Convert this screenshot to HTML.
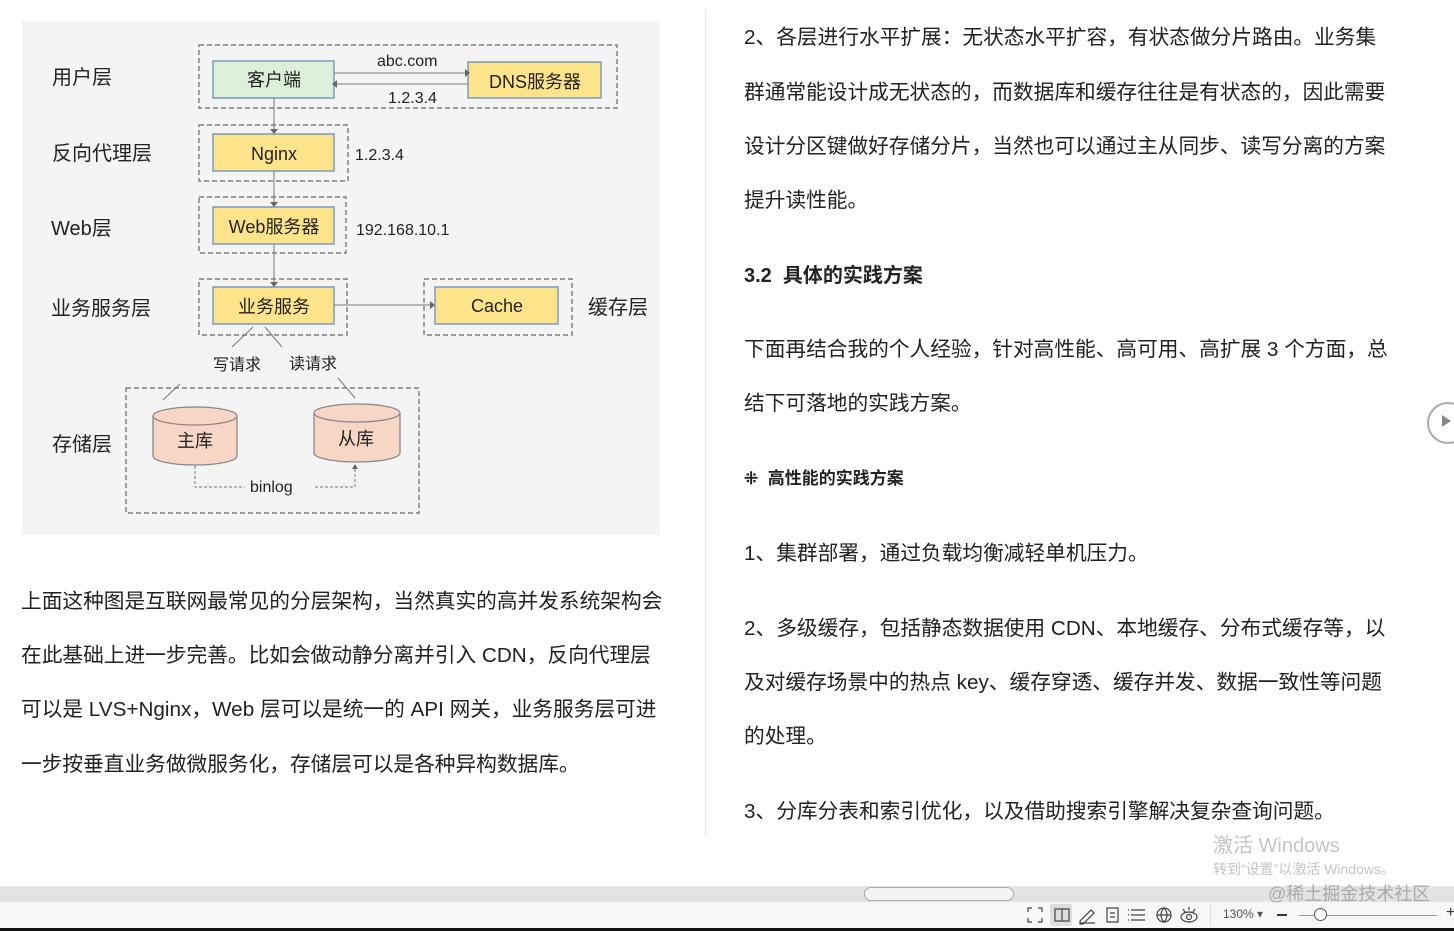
<!DOCTYPE html>
<html><head><meta charset="utf-8"><style>
body{margin:0;width:1454px;height:931px;background:#fff;position:relative;overflow:hidden;font-family:"Liberation Sans","Noto Sans CJK SC",sans-serif;color:#222}
.t{position:absolute;font-size:20.7px;white-space:nowrap;line-height:1;}
.h{font-weight:bold;}
</style></head><body>
<svg style="position:absolute;left:0;top:0" width="705" height="560" font-family="Liberation Sans,Noto Sans CJK SC,sans-serif">
<rect x="22" y="22" width="638" height="513" fill="#f4f4f4"/>
<g fill="none" stroke="#666" stroke-dasharray="5,3" stroke-width="1.2">
<rect x="199" y="45" width="418" height="63"/>
<rect x="199" y="125" width="149" height="56"/>
<rect x="199" y="197" width="147" height="56"/>
<rect x="199" y="279" width="148" height="56"/>
<rect x="424" y="279" width="148" height="56"/>
<rect x="126" y="388" width="293" height="125"/>
</g>
<g stroke="#555" stroke-width="1.5">
<rect x="213" y="61" width="121" height="37" fill="#dcefd8" stroke="#7a9cc0"/>
<rect x="468" y="62" width="133" height="36" fill="#fde48a" stroke="#7a9cc0"/>
<rect x="213" y="134" width="121" height="37" fill="#fde48a" stroke="#7a9cc0"/>
<rect x="213" y="207" width="121" height="37" fill="#fde48a" stroke="#7a9cc0"/>
<rect x="213" y="287" width="121" height="37" fill="#fde48a" stroke="#7a9cc0"/>
<rect x="435" y="287" width="123" height="37" fill="#fde48a" stroke="#7a9cc0"/>
</g>
<g stroke="#777" stroke-width="1" fill="none">
<path d="M334 73H465M468 84H337M274 98V131M274 171V204M274 244V284M334 305H432M253 327L232 347M265 327L282 347M180 384L163 400M338 378L355 398"/>
<path d="M195 466V487H245M315 487H355V468" stroke-dasharray="3,2"/>
</g>
<g fill="#666"><path d="M465 69l5 4-5 4zM337 80l-5 4 5 4zM270 129l4 5 4-5zM270 202l4 5 4-5zM270 282l4 5 4-5zM430 301l5 4-5 4zM352 469l3-5 3 5z"/></g>
<g stroke="#888" stroke-width="1.3" fill="#f7d6c6">
<path d="M153 416V456A42 9 0 0 0 237 456V416"/>
<ellipse cx="195" cy="416" rx="42" ry="9"/>
<path d="M314 413V453A43 9 0 0 0 400 453V413"/>
<ellipse cx="357" cy="413" rx="43" ry="9"/>
</g>
<g font-size="20" fill="#222">
<text x="52" y="84">用户层</text><text x="52" y="160">反向代理层</text><text x="51" y="235">Web层</text>
<text x="51" y="315">业务服务层</text><text x="52" y="451">存储层</text><text x="588" y="314">缓存层</text>
</g>
<g font-size="18" fill="#222" text-anchor="middle">
<text x="274" y="86">客户端</text><text x="535" y="88">DNS服务器</text><text x="274" y="160">Nginx</text>
<text x="274" y="233">Web服务器</text><text x="274" y="313">业务服务</text><text x="497" y="312">Cache</text>
<text x="195" y="447">主库</text><text x="356" y="445">从库</text>
</g>
<g font-size="16" fill="#222">
<text x="377" y="66">abc.com</text><text x="388" y="103">1.2.3.4</text><text x="355" y="160">1.2.3.4</text>
<text x="356" y="235">192.168.10.1</text><text x="213" y="370">写请求</text><text x="289" y="369">读请求</text><text x="250" y="492">binlog</text>
</g>
</svg>
<div style="position:absolute;left:705px;top:10px;width:1px;height:826px;background:#e4e4e4"></div>
<div class="t" style="left:21px;top:592px">上面这种图是互联网最常见的分层架构，当然真实的高并发系统架构会</div>
<div class="t" style="left:21px;top:646px">在此基础上进一步完善。比如会做动静分离并引入 CDN，反向代理层</div>
<div class="t" style="left:21px;top:700px">可以是 LVS+Nginx，Web 层可以是统一的 API 网关，业务服务层可进</div>
<div class="t" style="left:21px;top:755px">一步按垂直业务做微服务化，存储层可以是各种异构数据库。</div>
<div class="t" style="left:744px;top:28px">2、各层进行水平扩展：无状态水平扩容，有状态做分片路由。业务集</div>
<div class="t" style="left:744px;top:83px">群通常能设计成无状态的，而数据库和缓存往往是有状态的，因此需要</div>
<div class="t" style="left:744px;top:137px">设计分区键做好存储分片，当然也可以通过主从同步、读写分离的方案</div>
<div class="t" style="left:744px;top:191px">提升读性能。</div>
<div class="t h" style="left:744px;top:266px;font-size:20px">3.2&nbsp; 具体的实践方案</div>
<div class="t" style="left:744px;top:340px">下面再结合我的个人经验，针对高性能、高可用、高扩展 3 个方面，总</div>
<div class="t" style="left:744px;top:394px">结下可落地的实践方案。</div>
<div class="t h" style="left:744px;top:470px;font-size:17px">⁜&nbsp; 高性能的实践方案</div>
<div class="t" style="left:744px;top:544px">1、集群部署，通过负载均衡减轻单机压力。</div>
<div class="t" style="left:744px;top:619px">2、多级缓存，包括静态数据使用 CDN、本地缓存、分布式缓存等，以</div>
<div class="t" style="left:744px;top:673px">及对缓存场景中的热点 key、缓存穿透、缓存并发、数据一致性等问题</div>
<div class="t" style="left:744px;top:727px">的处理。</div>
<div class="t" style="left:744px;top:802px">3、分库分表和索引优化，以及借助搜索引擎解决复杂查询问题。</div>
<div style="position:absolute;left:1427px;top:402px;width:38px;height:38px;border:2px solid #aaa;border-radius:50%;background:#fff"></div>
<div style="position:absolute;left:1442px;top:415px;width:0;height:0;border-left:9px solid #888;border-top:6px solid transparent;border-bottom:6px solid transparent"></div>
<div class="t" style="left:1213px;top:836px;font-size:20px;color:#c4c4c4">激活 Windows</div>
<div class="t" style="left:1213px;top:862px;font-size:14px;color:#c4c4c4">转到“设置”以激活 Windows。</div>
<div style="position:absolute;left:0;top:886px;width:1454px;height:16px;background:#e3e3e3"></div>
<div style="position:absolute;left:864px;top:887px;width:148px;height:12px;border:1px solid #aaa;border-radius:7px;background:#f4f4f4"></div>
<div style="position:absolute;left:0;top:902px;width:1454px;height:26px;background:#f7f7f7"></div>
<div class="t" style="left:1268px;top:885px;font-size:18px;color:#aaa">@稀土掘金技术社区</div>
<div style="position:absolute;left:1050px;top:904px;width:22px;height:22px;background:#ddd;border-radius:2px"></div>
<svg style="position:absolute;left:1025px;top:905px" width="180" height="20" fill="none" stroke="#444" stroke-width="1.2">
<path d="M3 7V3H7M13 3H17V7M3 13V17H7M13 17H17V13"/>
<path d="M30 4H44V16H30ZM37 4V16"/>
<path d="M55 16L66 5L69 8L58 19H55ZM55 18H70"/>
<path d="M82 3H93V17H82ZM85 8H90M85 12H90"/>
<path d="M106 5H120M106 10H120M106 15H120M103 5h1M103 10h1M103 15h1"/>
<circle cx="139" cy="10" r="7"/><path d="M132 10H146M139 3C135 7 135 13 139 17C143 13 143 7 139 3"/>
<ellipse cx="164" cy="12" rx="8" ry="5"/><circle cx="164" cy="12" r="2.5"/><path d="M158 4l2 3M164 2v3M170 4l-2 3"/>
</svg>
<div style="position:absolute;left:1210px;top:904px;width:1px;height:22px;background:#ddd"></div>
<div class="t" style="left:1223px;top:908px;font-size:12px;color:#555">130% ▾</div>
<div style="position:absolute;left:1277px;top:914px;width:10px;height:2px;background:#333"></div>
<div style="position:absolute;left:1299px;top:915px;width:138px;height:1px;background:#999"></div>
<div style="position:absolute;left:1314px;top:908px;width:11px;height:11px;border:1px solid #555;border-radius:50%;background:#fff"></div>
<div class="t" style="left:1446px;top:905px;font-size:16px;color:#333">+</div>
<div style="position:absolute;left:0;top:928px;width:1454px;height:3px;background:#111"></div>
</body></html>
